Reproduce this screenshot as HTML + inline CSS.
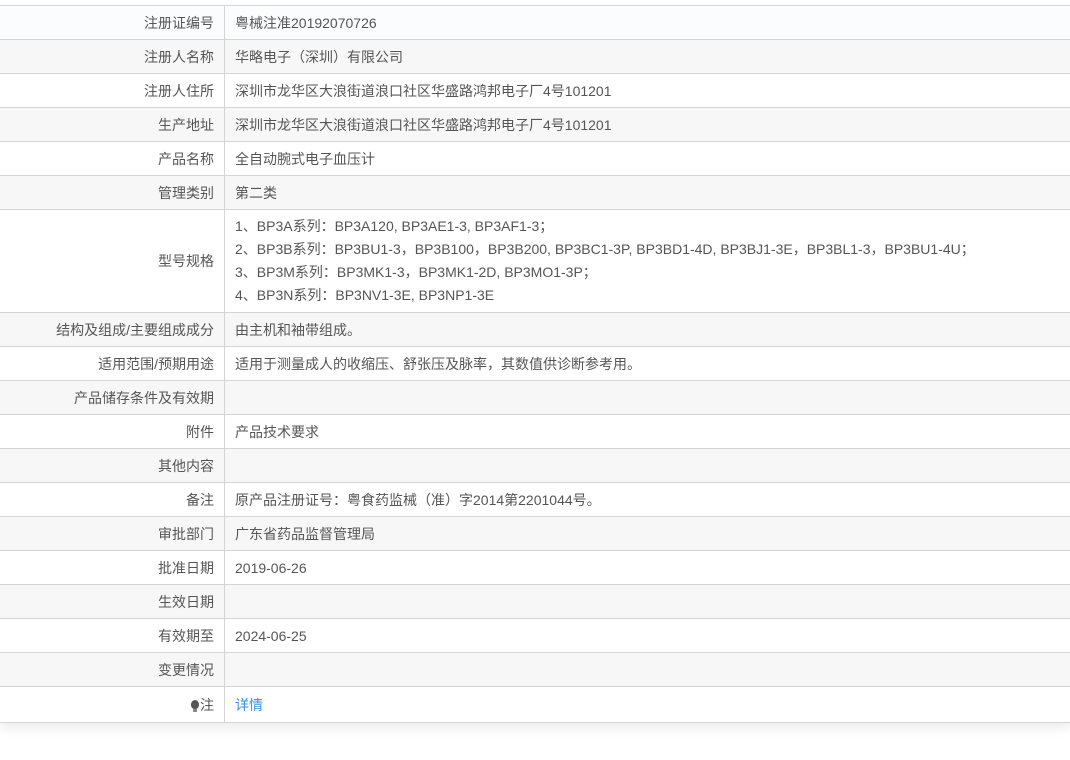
<!DOCTYPE html>
<html><head><meta charset="utf-8"><style>
body{margin:0;background:#fff;font-family:"Liberation Sans","Noto Sans CJK SC",sans-serif;font-size:14px;color:#555;}
.wrap{position:absolute;left:0;top:5px;width:1070px;box-shadow:0 6px 10px rgba(0,0,0,0.07);}
table{border-collapse:collapse;width:1070px;table-layout:fixed;}
td{border-top:1px solid #d4d4d4;border-bottom:1px solid #d4d4d4;height:33px;padding:0;vertical-align:middle;}
td.l{width:214px;text-align:right;padding-right:10px;border-right:1px solid #d4d4d4;}
td.v{padding-left:10px;}
tr:nth-child(even) td{background:#f7f7f7;}
tr:first-child td{background:#fbfcfe;}
.m{line-height:23px;padding-top:5px;padding-bottom:5px;}
a{color:#3a8ee6;text-decoration:none;}
.bulb{display:inline-block;width:8px;height:9px;background:#555;border-radius:50% 50% 45% 45%;position:relative;top:-1px;margin-right:1px;}
.bulb:after{content:"";position:absolute;left:2px;top:9px;width:4px;height:3px;background:#888;}
</style></head><body>
<div class="wrap"><table>
<tr><td class="l">注册证编号</td><td class="v">粤械注准20192070726</td></tr>
<tr><td class="l">注册人名称</td><td class="v">华略电子（深圳）有限公司</td></tr>
<tr><td class="l">注册人住所</td><td class="v">深圳市龙华区大浪街道浪口社区华盛路鸿邦电子厂4号101201</td></tr>
<tr><td class="l">生产地址</td><td class="v">深圳市龙华区大浪街道浪口社区华盛路鸿邦电子厂4号101201</td></tr>
<tr><td class="l">产品名称</td><td class="v">全自动腕式电子血压计</td></tr>
<tr><td class="l">管理类别</td><td class="v">第二类</td></tr>
<tr><td class="l">型号规格</td><td class="v m">1、BP3A系列：BP3A120, BP3AE1-3, BP3AF1-3；<br>2、BP3B系列：BP3BU1-3，BP3B100，BP3B200, BP3BC1-3P, BP3BD1-4D, BP3BJ1-3E，BP3BL1-3，BP3BU1-4U；<br>3、BP3M系列：BP3MK1-3，BP3MK1-2D, BP3MO1-3P；<br>4、BP3N系列：BP3NV1-3E, BP3NP1-3E</td></tr>
<tr><td class="l">结构及组成/主要组成成分</td><td class="v">由主机和袖带组成。</td></tr>
<tr><td class="l">适用范围/预期用途</td><td class="v">适用于测量成人的收缩压、舒张压及脉率，其数值供诊断参考用。</td></tr>
<tr><td class="l">产品储存条件及有效期</td><td class="v"></td></tr>
<tr><td class="l">附件</td><td class="v">产品技术要求</td></tr>
<tr><td class="l">其他内容</td><td class="v"></td></tr>
<tr><td class="l">备注</td><td class="v">原产品注册证号：粤食药监械（准）字2014第2201044号。</td></tr>
<tr><td class="l">审批部门</td><td class="v">广东省药品监督管理局</td></tr>
<tr><td class="l">批准日期</td><td class="v">2019-06-26</td></tr>
<tr><td class="l">生效日期</td><td class="v"></td></tr>
<tr><td class="l">有效期至</td><td class="v">2024-06-25</td></tr>
<tr><td class="l">变更情况</td><td class="v"></td></tr>
<tr><td class="l" style="height:35px"><span class="bulb"></span>注</td><td class="v"><a>详情</a></td></tr>
</table></div>
</body></html>
